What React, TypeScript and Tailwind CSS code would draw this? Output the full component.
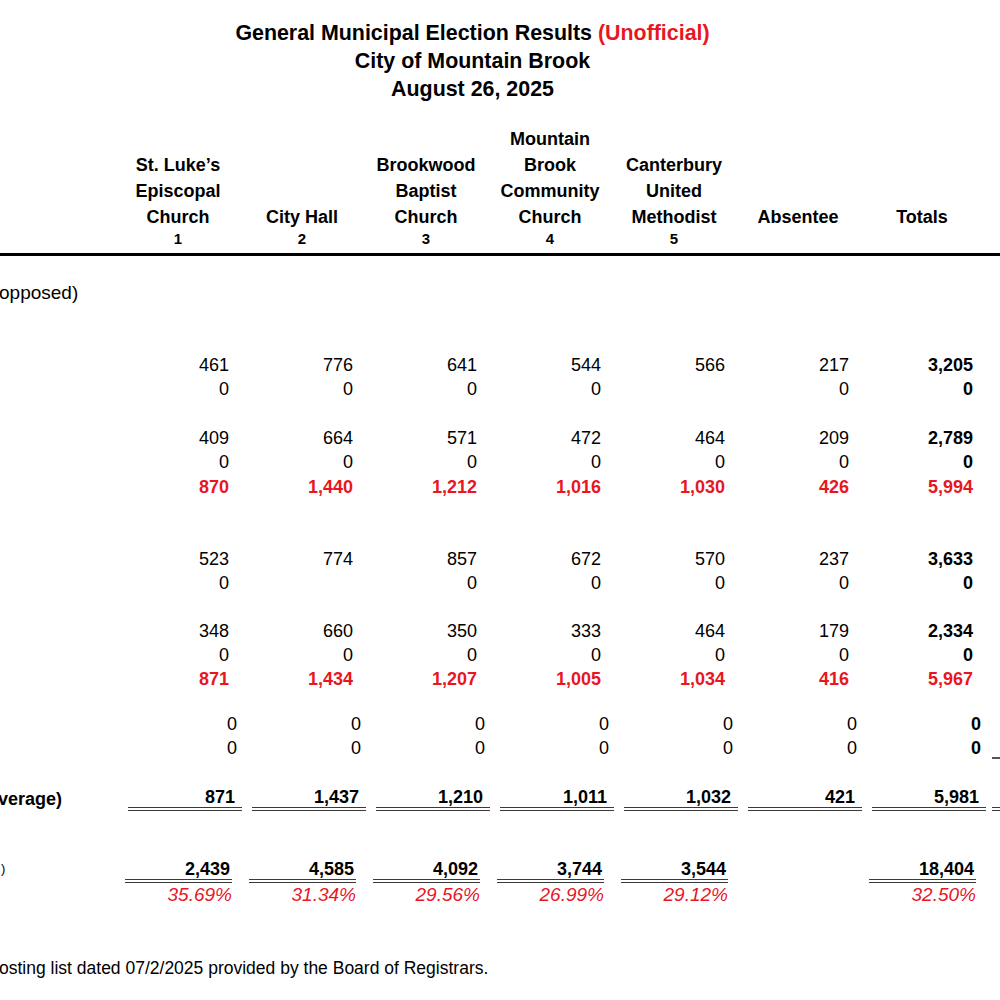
type Cell = string | null;

const RED = "text-[#e8171f]";

const headers = [
  { lines: ["St. Luke’s", "Episcopal", "Church"], no: "1" },
  { lines: ["City Hall"], no: "2" },
  { lines: ["Brookwood", "Baptist", "Church"], no: "3" },
  { lines: ["Mountain", "Brook", "Community", "Church"], no: "4" },
  { lines: ["Canterbury", "United", "Methodist"], no: "5" },
  { lines: ["Absentee"], no: "" },
  { lines: ["Totals"], no: "" },
];

function Row({ cells, red, mt }: { cells: Cell[]; red?: boolean; mt: string }) {
  return (
    <div className={`grid grid-cols-[105px_repeat(7,124px)] h-6 items-center text-[18px] leading-6 ${mt}`}>
      <div />
      {cells.map((c, i) => (
        <div
          key={i}
          className={`text-right ${red ? `font-bold ${RED}` : i === 6 ? "font-bold text-black" : "text-black"}`}
        >
          {c}
        </div>
      ))}
    </div>
  );
}

export default function App() {
  return (
    <div className="w-[1000px] h-[1000px] overflow-hidden bg-white text-black font-['Liberation_Sans',Arial,sans-serif]">
      {/* title */}
      <div className="pt-[19px] pr-[55px] flex flex-col items-center font-bold text-[21.4px] leading-[28px]">
        <p>
          General Municipal Election Results <span className={RED}>(Unofficial)</span>
        </p>
        <p>City of Mountain Brook</p>
        <p>August 26, 2025</p>
      </div>

      {/* column heads */}
      <div className="mt-[23px] grid grid-cols-[116px_repeat(7,124px)] items-end text-center font-bold text-[18px] leading-[26px]">
        <div />
        {headers.map((h) => (
          <div key={h.lines[0]} className="flex flex-col">
            {h.lines.map((l) => (
              <span key={l}>{l}</span>
            ))}
          </div>
        ))}
      </div>
      <div className="-mt-[1px] grid grid-cols-[116px_repeat(7,124px)] text-center font-bold text-[15px] leading-[20px]">
        <div />
        {headers.map((h) => (
          <div key={h.lines[0]}>{h.no}</div>
        ))}
      </div>
      <div className="mt-[4px] h-[3px] bg-black" />

      <p className="mt-[25px] -ml-[1px] text-[19px] leading-6">opposed)</p>

      <Row mt="mt-[48px]" cells={["461", "776", "641", "544", "566", "217", "3,205"]} />
      <Row mt="mt-0" cells={["0", "0", "0", "0", null, "0", "0"]} />
      <Row mt="mt-[25px]" cells={["409", "664", "571", "472", "464", "209", "2,789"]} />
      <Row mt="mt-0" cells={["0", "0", "0", "0", "0", "0", "0"]} />
      <Row mt="mt-[1px]" red cells={["870", "1,440", "1,212", "1,016", "1,030", "426", "5,994"]} />

      <Row mt="mt-[48px]" cells={["523", "774", "857", "672", "570", "237", "3,633"]} />
      <Row mt="mt-0" cells={["0", null, "0", "0", "0", "0", "0"]} />
      <Row mt="mt-[24px]" cells={["348", "660", "350", "333", "464", "179", "2,334"]} />
      <Row mt="mt-0" cells={["0", "0", "0", "0", "0", "0", "0"]} />
      <Row mt="mt-0" red cells={["871", "1,434", "1,207", "1,005", "1,034", "416", "5,967"]} />

      {/* write-in rows */}
      <div className="mt-[21px] grid grid-cols-[113px_repeat(7,124px)_1fr] h-6 items-center text-[18px] leading-6">
        <div />
        {["0", "0", "0", "0", "0", "0", "0"].map((c, i) => (
          <div key={i} className={`text-right ${i === 6 ? "font-bold" : ""}`}>
            {c}
          </div>
        ))}
        <div />
      </div>
      <div className="grid grid-cols-[113px_repeat(7,124px)_1fr] h-6 items-center text-[18px] leading-6">
        <div />
        {["0", "0", "0", "0", "0", "0", "0"].map((c, i) => (
          <div key={i} className={`text-right ${i === 6 ? "font-bold" : ""}`}>
            {c}
          </div>
        ))}
        <div className="self-end ml-[11px] h-[2px] bg-[#555] mb-[1px]" />
      </div>

      {/* average */}
      <div className="mt-[28px] grid grid-cols-[118px_repeat(7,114px)_1fr] gap-x-[10px] items-end font-bold text-[18px] leading-[19px]">
        <span className="-ml-[2px] pb-[2px] text-[18px] whitespace-nowrap">verage)</span>
        {["871", "1,437", "1,210", "1,011", "1,032", "421", "5,981"].map((c) => (
          <div key={c} className="text-right pr-[7px] border-b-4 border-double border-[#3a3a3a]">
            {c}
          </div>
        ))}
        <div className="h-[4px] border-b-4 border-double border-[#3a3a3a] -ml-[4px]" />
      </div>

      {/* registered */}
      <div className="mt-[48px] grid grid-cols-[108px_repeat(7,107px)] gap-x-[17px] items-end font-bold text-[18px] leading-[20px]">
        <span className="ml-[1px] pb-[7px] text-[13px] font-normal leading-[14px]">)</span>
        {["2,439", "4,585", "4,092", "3,744", "3,544", null, "18,404"].map((c, i) => (
          <div key={i} className={`text-right pr-[2px] ${c ? "border-b-4 border-double border-[#3a3a3a]" : ""}`}>
            {c}
          </div>
        ))}
      </div>
      <div className={`grid grid-cols-[108px_repeat(7,107px)] gap-x-[17px] italic text-[19px] leading-[24px] ${RED}`}>
        <div />
        {["35.69%", "31.34%", "29.56%", "26.99%", "29.12%", null, "32.50%"].map((c, i) => (
          <div key={i} className="text-right">
            {c}
          </div>
        ))}
      </div>

      <p className="mt-[49px] -ml-[1px] text-[17.5px] leading-6">
        osting list dated 07/2/2025 provided by the Board of Registrars.
      </p>
    </div>
  );
}
